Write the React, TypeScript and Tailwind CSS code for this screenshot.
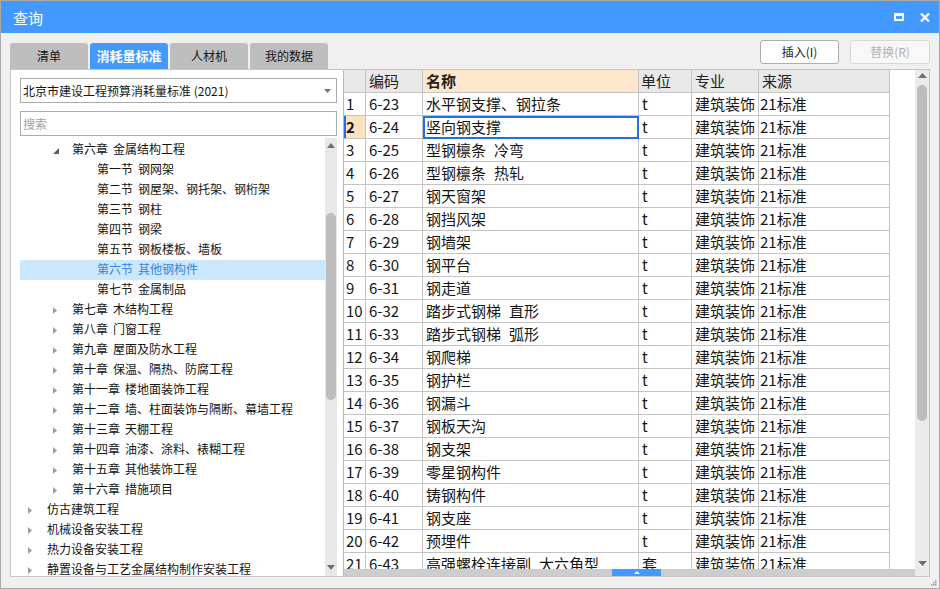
import React from 'react';

type Node = { lv: 0 | 1 | 2; t: string; open?: boolean; sel?: boolean };

const tree: Node[] = [
  { lv: 1, t: '第六章 金属结构工程', open: true },
  { lv: 2, t: '第一节 钢网架' },
  { lv: 2, t: '第二节 钢屋架、钢托架、钢桁架' },
  { lv: 2, t: '第三节 钢柱' },
  { lv: 2, t: '第四节 钢梁' },
  { lv: 2, t: '第五节 钢板楼板、墙板' },
  { lv: 2, t: '第六节 其他钢构件', sel: true },
  { lv: 2, t: '第七节 金属制品' },
  { lv: 1, t: '第七章 木结构工程' },
  { lv: 1, t: '第八章 门窗工程' },
  { lv: 1, t: '第九章 屋面及防水工程' },
  { lv: 1, t: '第十章 保温、隔热、防腐工程' },
  { lv: 1, t: '第十一章 楼地面装饰工程' },
  { lv: 1, t: '第十二章 墙、柱面装饰与隔断、幕墙工程' },
  { lv: 1, t: '第十三章 天棚工程' },
  { lv: 1, t: '第十四章 油漆、涂料、裱糊工程' },
  { lv: 1, t: '第十五章 其他装饰工程' },
  { lv: 1, t: '第十六章 措施项目' },
  { lv: 0, t: '仿古建筑工程' },
  { lv: 0, t: '机械设备安装工程' },
  { lv: 0, t: '热力设备安装工程' },
  { lv: 0, t: '静置设备与工艺金属结构制作安装工程' },
];

const rows: [string, string, string][] = [
  ['6-23', '水平钢支撑、钢拉条', 't'],
  ['6-24', '竖向钢支撑', 't'],
  ['6-25', '型钢檩条 冷弯', 't'],
  ['6-26', '型钢檩条 热轧', 't'],
  ['6-27', '钢天窗架', 't'],
  ['6-28', '钢挡风架', 't'],
  ['6-29', '钢墙架', 't'],
  ['6-30', '钢平台', 't'],
  ['6-31', '钢走道', 't'],
  ['6-32', '踏步式钢梯 直形', 't'],
  ['6-33', '踏步式钢梯 弧形', 't'],
  ['6-34', '钢爬梯', 't'],
  ['6-35', '钢护栏', 't'],
  ['6-36', '钢漏斗', 't'],
  ['6-37', '钢板天沟', 't'],
  ['6-38', '钢支架', 't'],
  ['6-39', '零星钢构件', 't'],
  ['6-40', '铸钢构件', 't'],
  ['6-41', '钢支座', 't'],
  ['6-42', '预埋件', 't'],
  ['6-43', '高强螺栓连接副 大六角型', '套'],
];

const indent = { 0: 'pl-[7px]', 1: 'pl-[32px]', 2: 'pl-[57px]' };

const cell = 'h-[23px] shrink-0 overflow-hidden whitespace-nowrap border-r border-b border-[#c4c4c4] leading-[22px]';

const TreeRow = ({ node }: { node: Node }) => {
  const [head, ...rest] = node.t.split(' ');
  return (
    <div
      className={`flex h-[20px] shrink-0 items-center whitespace-nowrap leading-[20px] ${indent[node.lv]} ${
        node.sel ? 'bg-[#cce8ff] text-[#2f86e0]' : 'text-[#151515]'
      }`}
    >
      <span className="flex w-[20px] shrink-0 items-center pl-[1px]">
        {node.lv < 2 &&
          (node.open ? (
            <svg width="6" height="6" className="mt-[1px]">
              <path d="M6 0 L6 6 L0 6 Z" fill="#5c5c5c" />
            </svg>
          ) : (
            <svg width="4" height="7">
              <path d="M0 0 L4 3.5 L0 7 Z" fill="#9c9c9c" />
            </svg>
          ))}
      </span>
      <span className="-mt-[3px]">{head}</span>
      {rest.length > 0 && <span className="-mt-[3px] ml-[5px]">{rest.join(' ')}</span>}
    </div>
  );
};

export default function App() {
  return (
    <div className="flex h-[589px] w-[940px] flex-col border border-[#a9a9a9] bg-[#f0f0f0] font-['Noto_Sans_CJK_SC','Noto_Sans',sans-serif] text-[#151515]">
      {/* title bar */}
      <div className="flex h-[32px] shrink-0 items-center justify-between bg-[#4499ff] pl-[12px] pr-[9px] text-white">
        <span className="text-[15px] leading-none">查询</span>
        <div className="flex items-center gap-[16px]">
          <span className="h-[8px] w-[10px] border-2 border-t-[3px] border-white" />
          <svg width="10" height="9" viewBox="0 0 10 9">
            <path d="M1 0.5 L9 8.5 M9 0.5 L1 8.5" stroke="#fff" strokeWidth="2.2" />
          </svg>
        </div>
      </div>

      {/* tabs + buttons */}
      <div className="flex h-[36px] shrink-0 items-end justify-between px-[9px]">
        <div className="flex gap-[2px]">
          <div className="flex h-[26px] w-[78px] items-center justify-center rounded-t-[3px] bg-[#bebebe] text-[12px]">清单</div>
          <div className="flex h-[26px] w-[78px] items-center justify-center rounded-t-[3px] bg-[#4499ff] text-[13px] font-bold text-white">消耗量标准</div>
          <div className="flex h-[26px] w-[78px] items-center justify-center rounded-t-[3px] bg-[#bebebe] text-[12px]">人材机</div>
          <div className="flex h-[26px] w-[78px] items-center justify-center rounded-t-[3px] bg-[#bebebe] text-[12px]">我的数据</div>
        </div>
        <div className="mb-[5px] flex gap-[11px]">
          <button type="button" className="h-[24px] w-[79px] rounded-[3px] border border-[#adadad] bg-white text-[12px] text-[#222]">
            插入(I)
          </button>
          <button type="button" className="h-[24px] w-[80px] rounded-[3px] border border-[#d6d6d6] bg-[#f8f8f8] text-[12px] text-[#b0b0b0]">
            替换(R)
          </button>
        </div>
      </div>

      {/* main pane */}
      <div className="mx-[9px] flex h-[508px] shrink-0 border border-[#c6c6c6] bg-white">
        {/* left */}
        <div className="flex w-[333px] shrink-0 flex-col border-r border-[#b8b8b8] pt-[8px] pr-[6px] pl-[9px]">
          <div className="flex h-[25px] shrink-0 items-center justify-between border border-[#ababab] pr-[5px] pl-[2px] text-[12px]">
            <span>北京市建设工程预算消耗量标准 (2021)</span>
            <svg width="7" height="4">
              <path d="M0 0 L7 0 L3.5 4 Z" fill="#777" />
            </svg>
          </div>
          <div className="mt-[8px] flex h-[25px] shrink-0 items-center border border-[#ababab] pl-[2px] text-[12px] text-[#a0a0a0]">
            搜索
          </div>
          <div className="mt-[2px] flex min-h-0 flex-1 text-[12px]">
            <div className="flex min-w-0 flex-1 flex-col overflow-hidden pt-[2px]">
              {tree.map((n) => (
                <TreeRow key={n.t} node={n} />
              ))}
            </div>
            <div className="flex w-[12px] shrink-0 flex-col items-center bg-[#e8e8e8]">
              <svg width="8" height="5" className="mt-[5px]">
                <path d="M4 0 L8 5 L0 5 Z" fill="#6e6e6e" />
              </svg>
              <div className="mt-[65px] h-[187px] w-[10px] rounded-full bg-[#bdbdbd]" />
              <div className="flex-1" />
              <svg width="8" height="5" className="mb-[6px]">
                <path d="M0 0 L8 0 L4 5 Z" fill="#6e6e6e" />
              </svg>
            </div>
          </div>
        </div>

        {/* right */}
        <div className="flex min-w-0 flex-1">
          <div className="flex w-[571px] shrink-0 flex-col">
            <div className="flex min-h-0 flex-1 flex-col overflow-hidden text-[15px]">
              <div className="flex shrink-0 text-[#222]">
                <div className={`${cell} w-[22px] bg-[#e8e8e8]`} />
                <div className={`${cell} w-[57px] bg-[#e8e8e8] pl-[3px]`}>编码</div>
                <div className={`${cell} w-[216px] bg-[#fde7cc] pl-[3px] font-bold`}>名称</div>
                <div className={`${cell} w-[53px] bg-[#e8e8e8] pl-[2px]`}>单位</div>
                <div className={`${cell} w-[67px] bg-[#e8e8e8] pl-[3px]`}>专业</div>
                <div className={`${cell} w-[131px] bg-[#e8e8e8] pl-[3px]`}>来源</div>
              </div>
              {rows.map(([code, name, unit], i) => {
                const active = i === 1;
                return (
                  <div key={code} className="flex shrink-0">
                    <div
                      className={`${cell} w-[22px] pl-[2px] ${
                        active ? 'bg-[#fde2c0] font-bold shadow-[inset_2px_0_0_#1f6fe5]' : ''
                      }`}
                    >
                      {i + 1}
                    </div>
                    <div className={`${cell} w-[57px] pl-[3px]`}>{code}</div>
                    <div
                      className={`${cell} w-[216px] pl-[3px] ${
                        active ? 'outline-2 -outline-offset-2 outline-[#1f6fe5]' : ''
                      }`}
                    >
                      {name.split(' ').map((p, k) => (
                        <span key={p} className={k > 0 ? 'ml-[8px]' : ''}>
                          {p}
                        </span>
                      ))}
                    </div>
                    <div className={`${cell} w-[53px] pl-[3px]`}>{unit}</div>
                    <div className={`${cell} w-[67px] pl-[3px]`}>建筑装饰</div>
                    <div className={`${cell} w-[131px] pl-[1px]`}>21标准</div>
                  </div>
                );
              })}
            </div>
            <div className="flex h-[7px] shrink-0 bg-[#cdcdcd] pl-[268px]">
              <div className="flex h-[7px] w-[49px] items-center justify-center bg-[#4499ff]">
                <svg width="6" height="3">
                  <path d="M3 0 L6 3 L0 3 Z" fill="#fff" />
                </svg>
              </div>
            </div>
          </div>
          <div className="flex w-[14px] shrink-0 flex-col items-center bg-[#ebebeb]">
            <svg width="9" height="5" className="mt-[3px]">
              <path d="M4.5 0 L9 5 L0 5 Z" fill="#6e6e6e" />
            </svg>
            <div className="mt-[7px] h-[336px] w-[10px] rounded-full bg-[#bdbdbd]" />
            <div className="flex-1" />
            <svg width="9" height="5" className="mb-[10px]">
              <path d="M0 0 L9 0 L4.5 5 Z" fill="#6e6e6e" />
            </svg>
          </div>
        </div>
      </div>

      {/* status strip */}
      <div className="flex flex-1 items-end justify-end pr-[2px] pb-[2px]">
        <svg width="7" height="7">
          <rect x="5" y="1" width="1.5" height="1.5" fill="#a0a0a0" />
          <rect x="3" y="3" width="1.5" height="1.5" fill="#a0a0a0" />
          <rect x="5" y="3" width="1.5" height="1.5" fill="#a0a0a0" />
          <rect x="1" y="5" width="1.5" height="1.5" fill="#a0a0a0" />
          <rect x="3" y="5" width="1.5" height="1.5" fill="#a0a0a0" />
          <rect x="5" y="5" width="1.5" height="1.5" fill="#a0a0a0" />
        </svg>
      </div>
    </div>
  );
}
